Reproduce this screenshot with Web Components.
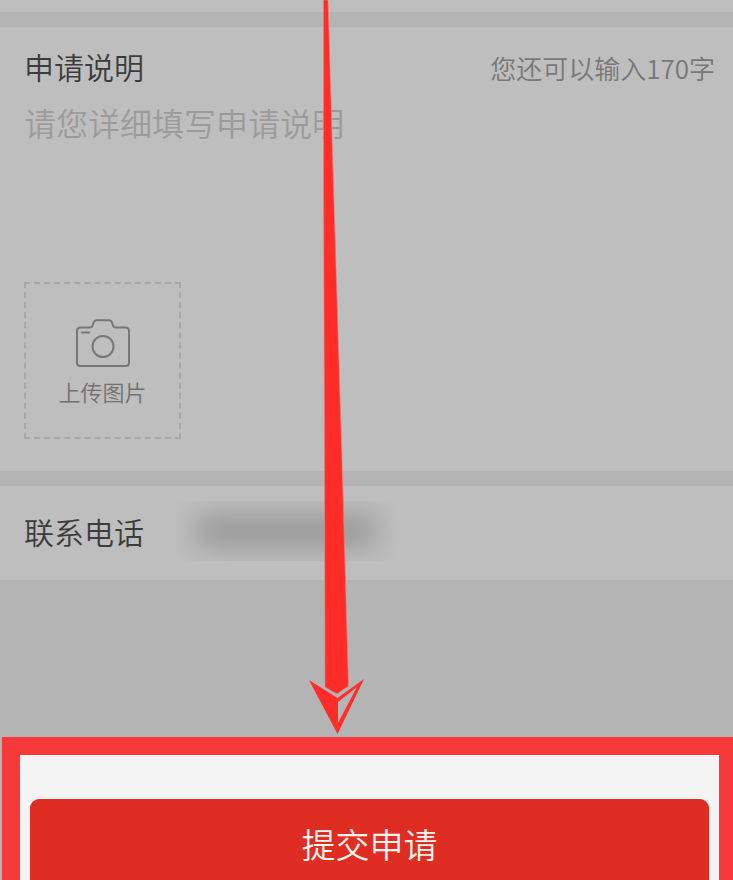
<!DOCTYPE html>
<html lang="zh-CN">
<head>
<meta charset="utf-8">
<meta name="viewport" content="width=device-width, initial-scale=1">
<title>提交申请</title>
<style>
    body {
        margin: 0;
        background: #b4b4b4;
        color: #3c3c3c;
        font-family: "Noto Sans CJK SC", sans-serif;
        font-weight: 350;
    }
</style>
</head>
<body>
<apply-page>
    <form-section></form-section>
    <apply-note label="申请说明" placeholder="请您详细填写申请说明" left="170">
        <upload-box>上传图片</upload-box>
    </apply-note>
    <phone-row>联系电话</phone-row>
    <submit-bar slot="footer">提交申请</submit-bar>
    <guide-arrow slot="overlay"></guide-arrow>
</apply-page>

<script>
class ApplyPage extends HTMLElement {
    constructor() {
        super();
        this.attachShadow({ mode: 'open' }).innerHTML = `
        <style>
            :host {
                display: block;
                position: relative;
                height: 100vh;
                overflow: hidden;
            }
            .list {
                display: flex;
                flex-direction: column;
                gap: 15px;
                margin-bottom: 157px;
            }
        </style>
        <main>
            <div class="list"><slot></slot></div>
            <slot name="footer"></slot>
        </main>
        <slot name="overlay"></slot>`;
    }
}

class FormSection extends HTMLElement {
    constructor() {
        super();
        this.attachShadow({ mode: 'open' }).innerHTML = `
        <style>
            :host {
                display: block;
                min-height: 12px;
                background: #bebebe;
            }
        </style>
        <slot></slot>`;
    }
}

class ApplyNote extends HTMLElement {
    connectedCallback() {
        this.attachShadow({ mode: 'open' }).innerHTML = `
        <style>
            :host {
                display: block;
                padding: 15px 18px 32px 24px;
                background: #bebebe;
            }
            .head {
                display: flex;
                align-items: baseline;
                justify-content: space-between;
                line-height: 48px;
            }
            label {
                font-size: 30px;
            }
            .count {
                color: #787878;
                font-size: 26px;
            }
            textarea {
                display: block;
                box-sizing: border-box;
                width: 100%;
                height: 160px;
                margin: 6px 0 24px;
                padding: 0;
                border: 0;
                outline: 0;
                resize: none;
                background: none;
                color: inherit;
                font: inherit;
                font-size: 32px;
                line-height: 48px;
            }
            textarea::placeholder {
                color: #9b9b9b;
                opacity: 1;
            }
        </style>
        <div class="head">
            <label for="note">${this.getAttribute('label')}</label>
            <span class="count">您还可以输入${this.getAttribute('left')}字</span>
        </div>
        <textarea id="note" placeholder="${this.getAttribute('placeholder')}"></textarea>
        <slot></slot>`;
    }
}

class UploadBox extends HTMLElement {
    constructor() {
        super();
        this.attachShadow({ mode: 'open' }).innerHTML = `
        <style>
            :host {
                display: block;
            }
            button {
                display: flex;
                flex-direction: column;
                align-items: center;
                justify-content: center;
                gap: 8px;
                box-sizing: border-box;
                width: 157px;
                height: 157px;
                padding: 4px 0 0;
                border: 2px dashed #a8a8a8;
                background: none;
                color: #717171;
                font: inherit;
                font-size: 22px;
                line-height: 32px;
            }
            svg {
                display: block;
                width: 54px;
                height: 48px;
                fill: none;
                stroke: #777;
                stroke-width: 2;
                stroke-linecap: round;
                stroke-linejoin: round;
            }
        </style>
        <button type="button">
            <svg viewBox="0 0 54 48" aria-hidden="true">
                <path d="M4.500 8.500H14Q16 8.500 16.600 6.500L17.600 3.500Q18.400 1.300 20.500 1.300H33Q35.200 1.300 36 3.500L37 6.500Q37.600 8.500 39.500 8.500H49.500Q53 8.500 53 12V43.500Q53 47 49.500 47H4.500Q1 47 1 43.500V12Q1 8.500 4.500 8.500Z"/>
                <path d="M6 13.500H13"/>
                <circle cx="27" cy="27.500" r="10.500"/>
            </svg>
            <slot></slot>
        </button>`;
    }
}

class PhoneRow extends HTMLElement {
    constructor() {
        super();
        this.attachShadow({ mode: 'open' }).innerHTML = `
        <style>
            :host {
                display: flex;
                align-items: center;
                gap: 32px;
                padding: 0 24px 4px;
                background: #bebebe;
                font-size: 30px;
                line-height: 90px;
            }
            .number {
                width: 220px;
                height: 60px;
                overflow: hidden;
            }
            .number::before {
                content: "";
                display: block;
                height: 32px;
                margin: 14px 20px;
                border-radius: 8px;
                background: #979797;
                filter: blur(14px);
            }
        </style>
        <slot></slot>
        <span class="number"></span>`;
    }
}

class SubmitBar extends HTMLElement {
    constructor() {
        super();
        this.attachShadow({ mode: 'open' }).innerHTML = `
        <style>
            :host {
                display: block;
                margin-left: 2px;
                padding: 44px 10px;
                border: solid #f8393a;
                border-width: 18px 14px 18px 18px;
                background: #f3f3f3;
            }
            button {
                display: block;
                width: 100%;
                padding: 0;
                border: 0;
                border-radius: 9px;
                background: #df2d24;
                color: #fff3ee;
                font: inherit;
                font-size: 34px;
                line-height: 90px;
            }
        </style>
        <button type="button"><slot></slot></button>`;
    }
}

class GuideArrow extends HTMLElement {
    constructor() {
        super();
        // the arrow lies over the form and points at the submit bar
        this.attachShadow({ mode: 'open' }).innerHTML = `
        <style>
            :host {
                position: absolute;
                top: 0;
                left: 308px;
                pointer-events: none;
            }
            svg {
                display: block;
            }
        </style>
        <svg width="58" height="738" viewBox="0 0 58 738" aria-hidden="true">
            <path fill="#ff2c28" stroke="#d98c8a" stroke-width=".6" d="M15.500 0H20L25 170L34 460L40.500 686L29 694L17 687L16.500 460L15.500 170Z"/>
            <path fill="#ff2c28" fill-rule="evenodd" d="M1 680L29.500 698L56 679L29.500 734ZM30 702V723L49 687Z"/>
        </svg>`;
    }
}

customElements.define('apply-page', ApplyPage);
customElements.define('form-section', FormSection);
customElements.define('apply-note', ApplyNote);
customElements.define('upload-box', UploadBox);
customElements.define('phone-row', PhoneRow);
customElements.define('submit-bar', SubmitBar);
customElements.define('guide-arrow', GuideArrow);
</script>
</body>
</html>
